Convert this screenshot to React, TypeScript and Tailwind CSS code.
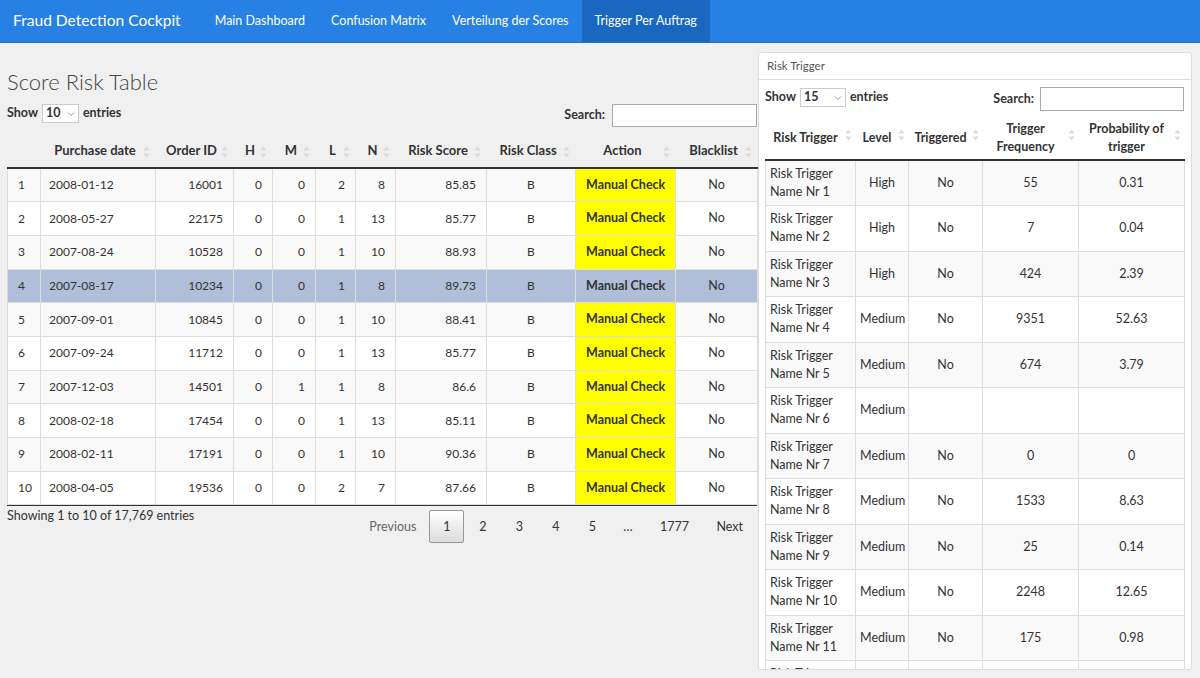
import React from "react";

const font = { fontFamily: "Lato, 'Open Sans', Arial, sans-serif" };

function SortIcon() {
  return (
    <svg width="7" height="12" viewBox="0 0 7 12" className="shrink-0">
      <path d="M3.5 0.5 L6.5 4.5 L0.5 4.5 Z" fill="#dcdcdc" />
      <path d="M3.5 11.5 L6.5 7.5 L0.5 7.5 Z" fill="#dcdcdc" />
    </svg>
  );
}

const leftRows = [
  ["1", "2008-01-12", "16001", "0", "0", "2", "8", "85.85"],
  ["2", "2008-05-27", "22175", "0", "0", "1", "13", "85.77"],
  ["3", "2007-08-24", "10528", "0", "0", "1", "10", "88.93"],
  ["4", "2007-08-17", "10234", "0", "0", "1", "8", "89.73"],
  ["5", "2007-09-01", "10845", "0", "0", "1", "10", "88.41"],
  ["6", "2007-09-24", "11712", "0", "0", "1", "13", "85.77"],
  ["7", "2007-12-03", "14501", "0", "1", "1", "8", "86.6"],
  ["8", "2008-02-18", "17454", "0", "0", "1", "13", "85.11"],
  ["9", "2008-02-11", "17191", "0", "0", "1", "10", "90.36"],
  ["10", "2008-04-05", "19536", "0", "0", "2", "7", "87.66"],
];

const rightRows = [
  ["1", "High", "No", "55", "0.31"],
  ["2", "High", "No", "7", "0.04"],
  ["3", "High", "No", "424", "2.39"],
  ["4", "Medium", "No", "9351", "52.63"],
  ["5", "Medium", "No", "674", "3.79"],
  ["6", "Medium", "", "", ""],
  ["7", "Medium", "No", "0", "0"],
  ["8", "Medium", "No", "1533", "8.63"],
  ["9", "Medium", "No", "25", "0.14"],
  ["10", "Medium", "No", "2248", "12.65"],
  ["11", "Medium", "No", "175", "0.98"],
  ["12", "Medium", "No", "12", "0.07"],
];

function LeftHeader({ label, w }: { label: string; w: number }) {
  return (
    <th style={{ width: w }} className="relative px-[10px] pr-[16px] h-[33px] font-bold text-[13px] text-[#333] text-center whitespace-nowrap">
      <span>{label}</span>
      <span className="absolute right-[6px] top-[11px]">
        <SortIcon />
      </span>
    </th>
  );
}

function RightHeader({ label, w }: { label: React.ReactNode; w: number }) {
  return (
    <th style={{ width: w }} className="relative pl-[4px] pr-[14px] pt-[5px] pb-[3px] font-bold text-[12.5px] leading-[18px] text-[#333] text-center">
      <span>{label}</span>
      <span className="absolute right-[4px] top-[14px]">
        <SortIcon />
      </span>
    </th>
  );
}

export default function App() {
  return (
    <div style={font} className="w-[1200px] h-[678px] overflow-hidden bg-[#f0f0f0] text-[#333]">
      {/* Navbar */}
      <div className="h-[43px] bg-[#2780e3] border-b border-[#1f6fc9] flex items-stretch">
        <div className="pl-[13px] pr-[21px] flex items-center text-white text-[15.6px]">Fraud Detection Cockpit</div>
        <div className="flex items-stretch text-[12.5px] text-white">
          <div className="px-[13px] flex items-center">Main Dashboard</div>
          <div className="px-[13px] flex items-center">Confusion Matrix</div>
          <div className="px-[13px] flex items-center">Verteilung der Scores</div>
          <div className="px-[13px] flex items-center bg-[#1967be]">Trigger Per Auftrag</div>
        </div>
      </div>

      <div className="flex">
        {/* Left column */}
        <div className="w-[758px] pl-[7px] pr-[1px]">
          <div className="text-[22px] font-light text-[#444] mt-[24px] leading-[30px]">Score Risk Table</div>
          <div className="flex justify-between items-end mt-[7px]">
            <div className="flex items-center gap-[4px] text-[12.5px] font-bold mb-[4px]">
              <span>Show</span>
              <span className="w-[37px] h-[19px] border border-[#ccc] bg-white flex items-center justify-between px-[3px]">
                10
                <svg width="8" height="6" viewBox="0 0 8 6"><path d="M1 1.5 L4 4.5 L7 1.5" stroke="#999" fill="none" strokeWidth="1" /></svg>
              </span>
              <span>entries</span>
            </div>
            <div className="flex items-center gap-[7px] text-[12.5px] font-bold">
              <span>Search:</span>
              <span className="w-[145px] h-[23px] border border-[#aaa] bg-white block" />
            </div>
          </div>

          <table className="table-fixed border-collapse w-[750px] mt-[8px] text-[12px]">
            <thead>
              <tr className="border-b-2 border-[#333]">
                <th style={{ width: 33 }} className="h-[33px]" />
                <LeftHeader label="Purchase date" w={115} />
                <LeftHeader label="Order ID" w={78} />
                <LeftHeader label="H" w={39} />
                <LeftHeader label="M" w={43} />
                <LeftHeader label="L" w={40} />
                <LeftHeader label="N" w={40} />
                <LeftHeader label="Risk Score" w={91} />
                <LeftHeader label="Risk Class" w={89} />
                <LeftHeader label="Action" w={100} />
                <LeftHeader label="Blacklist" w={82} />
              </tr>
            </thead>
            <tbody>
              {leftRows.map((r, i) => {
                const sel = i === 3;
                const bg = sel ? "bg-[#b0bed9]" : i % 2 === 0 ? "bg-[#f9f9f9]" : "bg-white";
                const cell = "h-[33.7px] px-[10px] border border-[#ddd] whitespace-nowrap";
                return (
                  <tr key={i} className={bg}>
                    <td className={`${cell} text-left`}>{r[0]}</td>
                    <td className={`${cell} text-left !pl-[8px]`}>{r[1]}</td>
                    <td className={`${cell} text-right`}>{r[2]}</td>
                    <td className={`${cell} text-right`}>{r[3]}</td>
                    <td className={`${cell} text-right`}>{r[4]}</td>
                    <td className={`${cell} text-right`}>{r[5]}</td>
                    <td className={`${cell} text-right`}>{r[6]}</td>
                    <td className={`${cell} text-right`}>{r[7]}</td>
                    <td className={`${cell} text-center`}>B</td>
                    <td className={`${cell} text-center font-bold text-[12.5px] ${sel ? "" : "bg-[#ffff00]"}`}>Manual Check</td>
                    <td className={`${cell} text-center text-[12.5px]`}>No</td>
                  </tr>
                );
              })}
            </tbody>
          </table>
          <div className="border-t border-[#333] w-[750px]" />

          <div className="flex justify-between w-[750px] text-[12px]">
            <div className="pt-[1px] text-[12.5px]">Showing 1 to 10 of 17,769 entries</div>
            <div className="flex items-center pt-[4px] pr-[1px] text-[12.5px]">
              <span className="px-[12px] text-[#666]">Previous</span>
              <span className="ml-[1px] w-[35px] h-[33px] flex items-center justify-center border border-[#979797] rounded-[2px] bg-gradient-to-b from-white to-[#dcdcdc]">1</span>
              <span className="w-[37px] text-center">2</span>
              <span className="w-[36px] text-center">3</span>
              <span className="w-[37px] text-center">4</span>
              <span className="w-[36px] text-center">5</span>
              <span className="w-[35px] text-center">…</span>
              <span className="w-[58px] text-center">1777</span>
              <span className="px-[13px]">Next</span>
            </div>
          </div>
        </div>

        {/* Right panel */}
        <div className="mt-[9px] w-[434px] h-[618px] bg-white border border-[#ddd] rounded-[3px] overflow-hidden">
          <div className="h-[27px] border-b border-[#ddd] px-[8px] flex items-center text-[11.5px] text-[#555]">Risk Trigger</div>
          <div className="pl-[6px] pr-[7px]">
            <div className="flex justify-between items-start mt-[7px]">
              <div className="flex items-center gap-[4px] text-[12.5px] font-bold mt-[1px]">
                <span>Show</span>
                <span className="w-[46px] h-[19px] border border-[#ccc] bg-white flex items-center justify-between px-[3px]">
                  15
                  <svg width="8" height="6" viewBox="0 0 8 6"><path d="M1 1.5 L4 4.5 L7 1.5" stroke="#999" fill="none" strokeWidth="1" /></svg>
                </span>
                <span>entries</span>
              </div>
              <div className="flex items-center gap-[6px] text-[12.5px] font-bold">
                <span>Search:</span>
                <span className="w-[144px] h-[24px] border border-[#aaa] bg-white block" />
              </div>
            </div>

            <table className="table-fixed border-collapse w-[419px] mt-[4px] text-[12.5px]">
              <thead>
                <tr className="border-b-2 border-[#333]">
                  <RightHeader label="Risk Trigger" w={90} />
                  <RightHeader label="Level" w={53} />
                  <RightHeader label="Triggered" w={74} />
                  <RightHeader label={<>Trigger<br />Frequency</>} w={96} />
                  <RightHeader label={<>Probability of<br />trigger</>} w={106} />
                </tr>
              </thead>
              <tbody>
                {rightRows.map((r, i) => {
                  const bg = i % 2 === 0 ? "bg-[#f9f9f9]" : "bg-white";
                  const cell = "h-[45.5px] px-[4px] border border-[#ddd] leading-[18px]";
                  return (
                    <tr key={i} className={bg}>
                      <td className={`${cell} text-left`}>Risk Trigger<br />Name Nr {r[0]}</td>
                      <td className={`${cell} text-center`}>{r[1]}</td>
                      <td className={`${cell} text-center`}>{r[2]}</td>
                      <td className={`${cell} text-center`}>{r[3]}</td>
                      <td className={`${cell} text-center`}>{r[4]}</td>
                    </tr>
                  );
                })}
              </tbody>
            </table>
          </div>
        </div>
      </div>
    </div>
  );
}
